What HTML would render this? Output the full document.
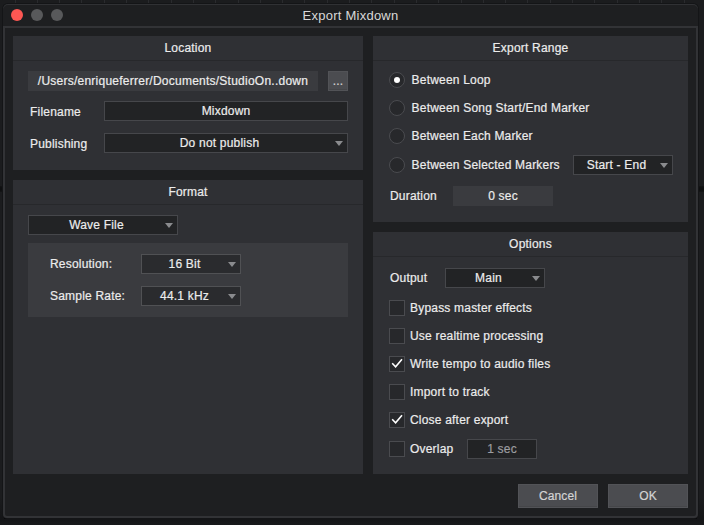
<!DOCTYPE html>
<html>
<head>
<meta charset="utf-8">
<title>Export Mixdown</title>
<style>
html,body{margin:0;padding:0;}
body{width:704px;height:525px;overflow:hidden;background:#1b1c1e;position:relative;font-family:"Liberation Sans",sans-serif;font-size:12px;color:#ececec;letter-spacing:0.2px;-webkit-text-stroke-width:0.2px;}
.abs{position:absolute;}
.tick{position:absolute;top:0;width:1px;height:4px;background:#2a2b2e;}
.band{position:absolute;left:0;width:704px;top:186px;height:6px;background:linear-gradient(#141516,#0e0f10 30%,#0e0f10 70%,#151617);}
.under{position:absolute;left:0;top:497px;width:704px;height:28px;background:linear-gradient(rgba(20,21,23,0),#141517 75%,#141517 80%,#18191b);}
.bline{position:absolute;left:4px;top:518px;width:693px;height:1px;background:#08090b;}

.win{position:absolute;left:3px;top:4px;width:695px;height:514px;box-sizing:border-box;background:#1e1f21;border-radius:5px 5px 4px 4px;box-shadow:0 0 0 1px #141517,inset 0 1px 0 #303134;}
.frame{position:absolute;left:3px;top:26px;width:695px;height:492px;box-sizing:border-box;border:2px solid #323336;border-radius:0 0 4px 4px;}
.dot{position:absolute;top:9px;width:12px;height:12px;border-radius:50%;background:#58595b;}
.title{position:absolute;left:-1.5px;top:6px;width:704px;text-align:center;font-size:13px;line-height:20px;color:#d8d8d8;letter-spacing:0.25px;-webkit-text-stroke-width:0;}
.panel{position:absolute;background:#2f3034;}
.panel .hd{position:absolute;left:0;top:0;right:0;height:24px;line-height:24px;text-align:center;border-bottom:1px solid #27282b;}
.lbl{position:absolute;line-height:20px;height:20px;white-space:nowrap;}
.field{position:absolute;height:20px;line-height:20px;background:#3a3b3f;text-align:center;white-space:nowrap;}
.input{position:absolute;height:20px;line-height:18px;box-sizing:border-box;background:rgba(0,0,0,0.27);background-clip:padding-box;border:1px solid rgba(255,255,255,0.115);text-align:center;white-space:nowrap;}
.dd{padding-right:13px;}
.dd:after{content:"";position:absolute;right:4px;top:7px;border-left:4px solid transparent;border-right:4px solid transparent;border-top:5px solid #8a8b8e;}
.radio{position:absolute;width:16px;height:16px;box-sizing:border-box;border-radius:50%;background:#27282b;border:1px solid #4a4b4f;}
.radio.on:after{content:"";position:absolute;left:4px;top:4px;width:6px;height:6px;border-radius:50%;background:#fff;}
.cb{position:absolute;width:16px;height:16px;box-sizing:border-box;background:#27282b;border:1px solid #4a4b4f;}
.cb svg{position:absolute;left:-1px;top:-1px;}
.btn{position:absolute;height:24px;line-height:22px;box-sizing:border-box;background:#4b4c50;border:1px solid #525357;box-shadow:inset 0 -1px 0 #454649;text-align:center;font-size:12px;letter-spacing:0.1px;color:#d4d4d4;}
</style>
</head>
<body>
<div id="ticks"><div class="tick" style="left:15px"></div><div class="tick" style="left:37px"></div><div class="tick" style="left:59px"></div><div class="tick" style="left:81px"></div><div class="tick" style="left:104px"></div><div class="tick" style="left:126px"></div><div class="tick" style="left:148px"></div><div class="tick" style="left:171px"></div><div class="tick" style="left:193px"></div><div class="tick" style="left:215px"></div><div class="tick" style="left:238px"></div><div class="tick" style="left:260px"></div><div class="tick" style="left:282px"></div><div class="tick" style="left:304px"></div><div class="tick" style="left:327px"></div><div class="tick" style="left:349px"></div><div class="tick" style="left:371px"></div><div class="tick" style="left:394px"></div><div class="tick" style="left:416px"></div><div class="tick" style="left:438px"></div><div class="tick" style="left:461px"></div><div class="tick" style="left:483px"></div><div class="tick" style="left:505px"></div><div class="tick" style="left:527px"></div><div class="tick" style="left:550px"></div><div class="tick" style="left:572px"></div><div class="tick" style="left:594px"></div><div class="tick" style="left:617px"></div><div class="tick" style="left:639px"></div><div class="tick" style="left:661px"></div><div class="tick" style="left:684px"></div></div>
<div class="band"></div>
<div class="under"></div>
<div class="bline"></div>
<div class="win"></div>
<div class="frame"></div>
<div class="dot" style="left:11px;background:#fc5753"></div>
<div class="dot" style="left:31px"></div>
<div class="dot" style="left:51px"></div>
<div class="title">Export Mixdown</div>

<!-- Location -->
<div class="panel" style="left:13px;top:36px;width:350px;height:134px"><div class="hd">Location</div></div>
<div class="field" style="left:28px;top:71px;width:290px;letter-spacing:0.24px">/Users/enriqueferrer/Documents/StudioOn..down</div>
<div class="btn" style="left:328px;top:71px;width:20px;height:20px;line-height:18px;font-size:12px">...</div>
<div class="lbl" style="left:30px;top:102px">Filename</div>
<div class="input" style="left:104px;top:101px;width:244px">Mixdown</div>
<div class="lbl" style="left:30px;top:134px">Publishing</div>
<div class="input dd" style="left:104px;top:133px;width:244px">Do not publish</div>

<!-- Format -->
<div class="panel" style="left:13px;top:180px;width:350px;height:294px"><div class="hd">Format</div></div>
<div class="input dd" style="left:28px;top:215px;width:150px">Wave File</div>
<div class="field" style="left:28px;top:243px;width:320px;height:74px"></div>
<div class="lbl" style="left:50px;top:254px">Resolution:</div>
<div class="input dd" style="left:141px;top:254px;width:100px">16 Bit</div>
<div class="lbl" style="left:50px;top:286px">Sample Rate:</div>
<div class="input dd" style="left:141px;top:286px;width:100px">44.1 kHz</div>

<!-- Export Range -->
<div class="panel" style="left:373px;top:36px;width:315px;height:186px"><div class="hd">Export Range</div></div>
<div class="radio on" style="left:389px;top:72px"></div><div class="lbl" style="left:411.6px;top:70px">Between Loop</div>
<div class="radio" style="left:389px;top:100px"></div><div class="lbl" style="left:411.6px;top:98px">Between Song Start/End Marker</div>
<div class="radio" style="left:389px;top:128px"></div><div class="lbl" style="left:411.6px;top:126px;letter-spacing:0.16px">Between Each Marker</div>
<div class="radio" style="left:389px;top:157px"></div><div class="lbl" style="left:411.6px;top:155px">Between Selected Markers</div>
<div class="input dd" style="left:573px;top:155px;width:100px">Start - End</div>
<div class="lbl" style="left:390px;top:186px">Duration</div>
<div class="field" style="left:453px;top:186px;width:100px">0 sec</div>

<!-- Options -->
<div class="panel" style="left:373px;top:232px;width:315px;height:242px"><div class="hd">Options</div></div>
<div class="lbl" style="left:390px;top:268px">Output</div>
<div class="input dd" style="left:445px;top:268px;width:100px">Main</div>
<div class="cb" style="left:389px;top:300px"></div><div class="lbl" style="left:410px;top:298px">Bypass master effects</div>
<div class="cb" style="left:389px;top:328px"></div><div class="lbl" style="left:410px;top:326px">Use realtime processing</div>
<div class="cb" style="left:389px;top:356px"><svg width="16" height="16" viewBox="0 0 16 16"><path d="M3.2 7.2 L6.6 10.7 L13 3.2" fill="none" stroke="#fff" stroke-width="1.6"/></svg></div><div class="lbl" style="left:410px;top:354px">Write tempo to audio files</div>
<div class="cb" style="left:389px;top:384px"></div><div class="lbl" style="left:410px;top:382px">Import to track</div>
<div class="cb" style="left:389px;top:412px"><svg width="16" height="16" viewBox="0 0 16 16"><path d="M3.2 7.2 L6.6 10.7 L13 3.2" fill="none" stroke="#fff" stroke-width="1.6"/></svg></div><div class="lbl" style="left:410px;top:410px">Close after export</div>
<div class="cb" style="left:389px;top:441px"></div><div class="lbl" style="left:410px;top:439px">Overlap</div>
<div class="input" style="left:467px;top:439px;width:70px;color:#9c9da0">1 sec</div>

<div class="btn" style="left:518px;top:484px;width:80px">Cancel</div>
<div class="btn" style="left:608px;top:484px;width:80px">OK</div>
</body>
</html>
